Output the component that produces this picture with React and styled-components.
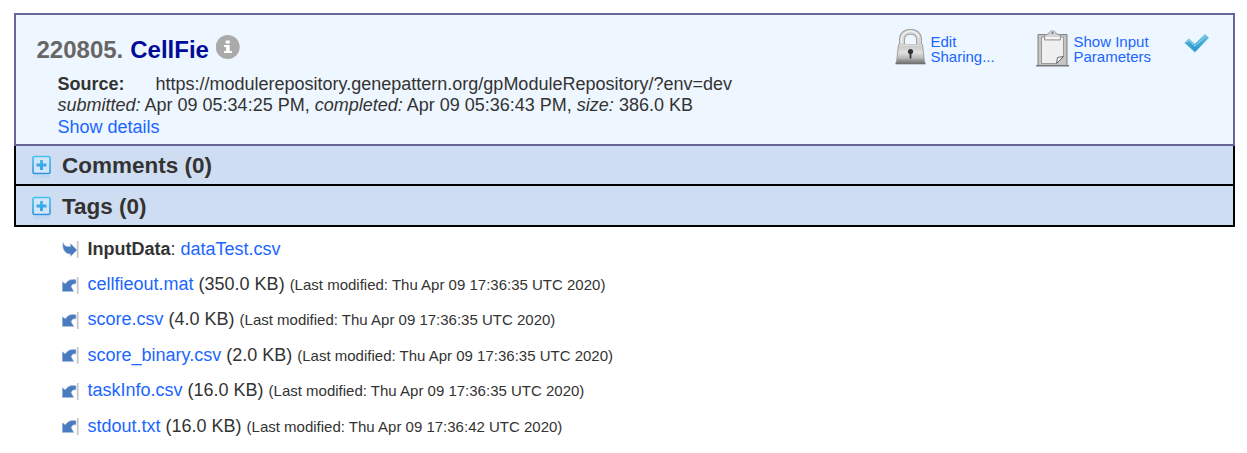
import React from "react";
import styled, { createGlobalStyle } from "styled-components";

const Global = createGlobalStyle`
  body { margin: 0; background: #fff; color: #333; font: 18px/21px "Liberation Sans", Arial, sans-serif; }
`;
const Page = styled.main`
  box-sizing: border-box;
  width: 1247px;
  height: 453px;
  padding: 13px 12px 0 14px;
  overflow: hidden;
`;
const Header = styled.header`
  box-sizing: border-box;
  height: 133px;
  border: 2px solid #666699;
  background: #eef6ff;
  display: flex;
  justify-content: space-between;
`;
const Summary = styled.div`
  padding: 18px 0 0 20.5px;
`;
const Title = styled.h1`
  margin: 0;
  display: flex;
  font-size: 24px;
  line-height: 34px;
  height: 41px;
  color: #666;
`;
const Name = styled.a`
  color: #000c99;
  margin: 0 7px 0 7px;
`;
const InfoIcon = styled.svg`
  margin-top: 2px;
`;
const Details = styled.div`
  padding-left: 21px;
  white-space: nowrap;
`;
const Line = styled.div`
  height: ${(p) => p.$h || 21}px;
  line-height: 21px;
`;
const Source = styled.b`
  display: inline-block;
  width: 98px;
`;
const Link = styled.a`
  color: #1a66ff;
`;
const Actions = styled.div`
  display: flex;
  align-items: flex-start;
  padding: 14px 24px 0 0;
`;
const Action = styled.a`
  display: flex;
  align-items: flex-start;
  width: ${(p) => p.$w}px;
  color: #1a66ff;
  font-size: 15px;
  line-height: 15px;
`;
const ActionText = styled.span`
  padding-top: 5px;
  margin-left: 4.5px;
  white-space: nowrap;
`;
const ClipboardIcon = styled.svg`
  margin-top: 1px;
`;
const CheckBox = styled.span`
  padding-top: 5px;
  line-height: 0;
`;
const Section = styled.section`
  box-sizing: border-box;
  height: ${(p) => p.$h}px;
  border: solid #000;
  border-width: 0 2px 2px;
  background: #cfddf2;
  display: flex;
  align-items: flex-start;
  padding: ${(p) => p.$top || 0}px 0 0 16px;
`;
const SectionTitle = styled.h2`
  margin: 1px 0 0 11px;
  font-size: 22.5px;
  line-height: 38px;
`;
const PlusIcon = styled.svg`
  flex: none;
  margin-top: 9px;
`;
const Files = styled.ul`
  list-style: none;
  margin: 0;
  padding: 4.45px 0 0 48px;
`;
const Row = styled.li`
  display: flex;
  align-items: center;
  height: 35.4px;
  white-space: pre;
`;
const RowText = styled.span`
  margin-left: 8.5px;
`;
const Modified = styled.small`
  font-size: 15px;
`;

const Info = () => (
  <InfoIcon width="24" height="24" viewBox="0 0 24 24">
    <circle cx="11.700" cy="12" r="12" fill="#aaa" />
    <path d="M9.700 5.500h4v3h-4zM8 10h5.700v6H16v2H8v-2h2v-4H8z" fill="#fff" />
  </InfoIcon>
);

const Lock = () => (
  <svg width="31" height="36" viewBox="0 0 31 36">
    <defs>
      <linearGradient id="metal" x2="0" y2="1">
        <stop stopColor="#c6c6c6" /><stop offset=".45" stopColor="#e0e0e0" />
        <stop offset=".75" stopColor="#b8b8b8" /><stop offset="1" stopColor="#777" />
      </linearGradient>
    </defs>
    <path d="M7 17V10.500C7 .2 24 .2 24 10.500V17" fill="none" stroke="#a0a0a0" strokeWidth="6" />
    <path d="M7 17V10.500C7 .2 24 .2 24 10.500V17" fill="none" stroke="#d8d8d8" strokeWidth="4" />
    <path d="M6.500 14V10.500C6.500 0 23.500 0 24 9" fill="none" stroke="#f2f2f2" strokeWidth="1.200" />
    <path d="M3.500 15.500h24l2 18h-28z" fill="url(#metal)" stroke="#a0a0a0" />
    <path d="M4 16h23" stroke="#f0f0f0" />
    <path d="M.5 34.300h30" stroke="#707070" strokeWidth="2" />
    <circle cx="15.500" cy="22.500" r="2.600" fill="#333" />
    <path d="M15.500 22.500v7" stroke="#333" strokeWidth="1.800" />
  </svg>
);

const Clipboard = () => (
  <ClipboardIcon width="33" height="37" viewBox="0 0 33 37">
    <path d="M2 4.500h29v31H2z" fill="#b8b8b8" stroke="#858585" />
    <path d="M3 5.500h27v29H3z" fill="#c6c6c6" />
    <path d="M5.500 7h22v20l-7 6.500h-15z" fill="#f0f0f0" stroke="#999" />
    <path d="M27.500 26.500l-7 7 1-6z" fill="#fafafa" stroke="#666" />
    <path d="M8.500 10V5.500l4.500-2C13.500 0 19.500 0 20 3.500l4.500 2V10z" fill="#d4d4d4" stroke="#999" />
    <path d="M9.500 8h14" stroke="#f9f9f9" strokeWidth="1.800" />
    <circle cx="16.500" cy="3" r="1.100" fill="#777" />
    <path d="M0 35.800h33" stroke="#777" strokeWidth="1.600" />
  </ClipboardIcon>
);

const Check = () => (
  <svg width="25" height="19" viewBox="0 0 25 19">
    <defs>
      <linearGradient id="tick" x2="0" y2="1">
        <stop stopColor="#63bfdc" /><stop offset=".6" stopColor="#3aa4d2" /><stop offset="1" stopColor="#2c93cb" />
      </linearGradient>
    </defs>
    <path d="M.8 8.800L4.800 5l6 5.200L21 .6l3.500 3.200L11 18.200z" fill="url(#tick)" stroke="#6dbfdf" strokeWidth=".8" />
    <path d="M2.500 8L5 6.500l6 5.500L22 2" fill="none" stroke="#a5dcf0" strokeWidth="1.100" strokeDasharray="1.600 .7" />
  </svg>
);

const Plus = () => (
  <PlusIcon width="19" height="26" viewBox="0 0 19 26">
    <defs>
      <linearGradient id="plus" gradientUnits="userSpaceOnUse" x1="0" y1="0" x2="0" y2="20">
        <stop stopColor="#45c4f5" /><stop offset="1" stopColor="#2b8fdf" />
      </linearGradient>
      <linearGradient id="shine" x2="0" y2="1">
        <stop stopColor="#80bdec" stopOpacity=".3" /><stop offset="1" stopColor="#80bdec" stopOpacity="0" />
      </linearGradient>
    </defs>
    <rect x="1" y="1.500" width="17" height="17" rx="1.500" fill="#d3e5f8" stroke="url(#plus)" strokeWidth="1.600" />
    <path d="M8.100 5h2.800v3.600h3.600v2.800h-3.600V15H8.100v-3.600H4.500V8.600h3.600z" fill="url(#plus)" />
    <path d="M1 20.500h17v4H1z" fill="url(#shine)" />
  </PlusIcon>
);

const Arrow = ({ input }) => (
  <svg width="17" height="20" viewBox="0 0 17 20">
    <path d="M15.700 2v17" stroke="#c8c8c8" strokeWidth="1.800" />
    {input ? (
      <path d="M1 3.500C2 7 5 8 8.500 7.500V4.500L15 11 8.500 17.500V15C3 15 0 10 1 3.500z" fill="#4a7bc1" stroke="#a9bfdf" strokeWidth=".6" />
    ) : (
      <path d="M.3 6.800L3.300 8.800C6 4.800 9.500 3.800 14 4.800v4c-3.200-.4-4 1-4.800 3L11.800 16.500H.3z" fill="#4a7bc1" stroke="#a9bfdf" strokeWidth=".6" />
    )}
  </svg>
);

const files = [
  ["cellfieout.mat", "350.0 KB", "17:36:35"],
  ["score.csv", "4.0 KB", "17:36:35"],
  ["score_binary.csv", "2.0 KB", "17:36:35"],
  ["taskInfo.csv", "16.0 KB", "17:36:35"],
  ["stdout.txt", "16.0 KB", "17:36:42"],
];

export default function App() {
  return (
    <Page>
      <Global />
      <Header>
        <Summary>
          <Title>220805. <Name>CellFie</Name><Info /></Title>
          <Details>
            <Line><Source>Source:</Source>https://modulerepository.genepattern.org/gpModuleRepository/?env=dev</Line>
            <Line $h={22}><i>submitted:</i> Apr 09 05:34:25 PM, <i>completed:</i> Apr 09 05:36:43 PM, <i>size:</i> 386.0 KB</Line>
            <Line><Link>Show details</Link></Line>
          </Details>
        </Summary>
        <Actions>
          <Action $w={141}><Lock /><ActionText>Edit<br />Sharing...</ActionText></Action>
          <Action $w={148}><Clipboard /><ActionText>Show Input<br />Parameters</ActionText></Action>
          <CheckBox><Check /></CheckBox>
        </Actions>
      </Header>
      <Section $h={40}><Plus /><SectionTitle>Comments (0)</SectionTitle></Section>
      <Section $h={41} $top={1}><Plus /><SectionTitle>Tags (0)</SectionTitle></Section>
      <Files>
        <Row><Arrow input /><RowText><b>InputData</b>: <Link>dataTest.csv</Link></RowText></Row>
        {files.map(([name, size, time]) => (
          <Row key={name}>
            <Arrow />
            <RowText><Link>{name}</Link> ({size}) <Modified>(Last modified: Thu Apr 09 {time} UTC 2020)</Modified></RowText>
          </Row>
        ))}
      </Files>
    </Page>
  );
}
